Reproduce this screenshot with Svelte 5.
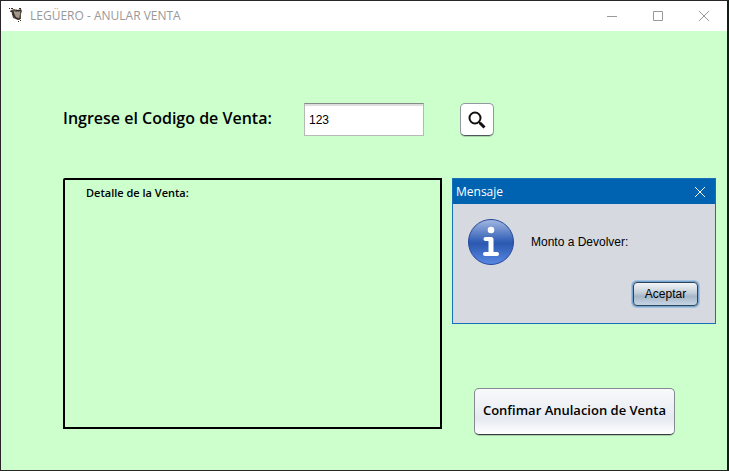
<script>
  let code = $state('123');
  let dialogOpen = $state(true);
</script>

<div class="window">
  <header class="titlebar">
    <svg class="logo" width="14" height="16" viewBox="0 0 14 16" aria-hidden="true">
      <path d="M2 3l3 -1 3 1 4-1 1 2-1 3v5l-3 1-5-2-1-4z" fill="#5a4f47" />
      <path d="M5 4l2 1 4-1v3l-1 4-3-1-2-4z" fill="#a3968a" />
      <path d="M1 4l3 1 1 4 3 3h3M3 7l3 3M7 3l3 1 2-1" fill="none" stroke="#2b2421" />
      <path d="M0 1h1v1H0zM2 1h2v1H2zM10 1h2v1h-2zM11 13h1v1h-1zM9 14h1v1H9z" fill="#3a302b" />
    </svg>
    <h1>LEGÜERO - ANULAR VENTA</h1>
    <div class="controls">
      <button aria-label="Minimizar"><svg width="10" height="10"><path d="M0 5.500h10" /></svg></button>
      <button aria-label="Maximizar"><svg width="10" height="10"><path d="M.5 .5h9v9h-9z" /></svg></button>
      <button aria-label="Cerrar"><svg width="10" height="10"><path d="M0 0l10 10M10 0L0 10" /></svg></button>
    </div>
  </header>

  <main>
    <form class="search" onsubmit={(e) => e.preventDefault()}>
      <label for="code">Ingrese el Codigo de Venta:</label>
      <input id="code" type="text" bind:value={code} />
      <button class="find" aria-label="Buscar">
        <svg width="18" height="18" viewBox="0 0 18 18" aria-hidden="true">
          <circle cx="7" cy="7" r="5.500" fill="none" stroke="#111" stroke-width="2" />
          <path d="M10.500 10.500l2 2" stroke="#111" stroke-width="2" />
          <path d="M12 12l4.500 4.500" stroke="#111" stroke-width="3" />
        </svg>
      </button>
    </form>

    <div class="body">
      <section class="detail"><h2>Detalle de la Venta:</h2></section>

      <div class="side">
        <div class="slot">
          {#if dialogOpen}
            <div class="dialog" role="dialog" aria-labelledby="dialog-title">
              <div class="dialog-bar">
                <span id="dialog-title">Mensaje</span>
                <button aria-label="Cerrar mensaje" onclick={() => (dialogOpen = false)}>
                  <svg width="10" height="10"><path d="M0 0l10 10M10 0L0 10" /></svg>
                </button>
              </div>
              <div class="message">
                <svg width="48" height="48" viewBox="0 0 48 48" aria-hidden="true">
                  <defs>
                    <linearGradient id="info" x1="0" y1="0" x2="0" y2="1">
                      <stop offset="0" stop-color="#a3b9e2" />
                      <stop offset=".46" stop-color="#3763b8" />
                      <stop offset=".54" stop-color="#2b59b1" />
                      <stop offset="1" stop-color="#5a89e4" />
                    </linearGradient>
                  </defs>
                  <circle cx="24" cy="24" r="22.500" fill="url(#info)" stroke="#25489a" />
                  <circle cx="24" cy="12" r="3.300" fill="#fff" />
                  <path d="M18.500 21h5" fill="none" stroke="#fff" stroke-width="4" stroke-linecap="round" />
                  <path d="M24 21.500v14" fill="none" stroke="#fff" stroke-width="5" stroke-linecap="round" />
                  <path d="M18 36h12" fill="none" stroke="#fff" stroke-width="4" stroke-linecap="round" />
                </svg>
                <p>Monto a Devolver:</p>
              </div>
              <div class="actions">
                <button class="accept" onclick={() => (dialogOpen = false)}>Aceptar</button>
              </div>
            </div>
          {/if}
        </div>
        <button class="confirm">Confimar Anulacion de Venta</button>
      </div>
    </div>
  </main>
</div>

<style>
  :global(body) { margin: 0; }
  * { box-sizing: border-box; }
  h1, h2, p { margin: 0; }
  button { padding: 0; color: #000; }
  svg { display: block; }

  .window {
    display: flex;
    flex-direction: column;
    min-height: 100vh;
    border: 1px solid #29252b;
    border-right: 2px solid #151b16;
    background: #ccffcc;
    font-family: "Open Sans", "Noto Sans", sans-serif;
  }
  .titlebar {
    display: flex;
    align-items: center;
    height: 30px;
    padding-left: 8px;
    background: #fff;
  }
  .logo { margin-right: 7px; margin-bottom: 2px; }
  h1 {
    flex: 1;
    color: #999;
    font: 400 12px/16px "Open Sans", "Noto Sans", sans-serif;
  }
  .controls { display: flex; }
  .controls button {
    display: grid;
    place-items: center;
    width: 46px;
    height: 28px;
    border: 0;
    background: none;
  }
  .controls path { fill: none; stroke: #999; }

  main { padding: 72px 11px 35px 62px; }
  .search { display: flex; align-items: center; }
  label {
    width: 241px;
    padding-bottom: 3px;
    font-size: 16px;
    line-height: 30px;
    font-weight: 600;
    white-space: nowrap;
  }
  input {
    width: 120px;
    height: 33px;
    padding: 0 4px;
    border: 1px solid #b5bab5;
    border-top-color: #858a88;
    border-radius: 0;
    background: #fff;
    box-shadow: inset 0 2px 1px #ddd;
    font: 12px "Liberation Sans", Arial, sans-serif;
    outline: 0;
  }
  .find {
    display: grid;
    place-items: center;
    width: 34px;
    height: 33px;
    margin-left: 36px;
    border: 1px solid #92989f;
    border-bottom-color: #50565f;
    border-radius: 5px;
    background: #fff;
    box-shadow: 0 1px #aad3ad;
  }
  .body {
    display: grid;
    grid-template-columns: minmax(0, 379fr) minmax(0, 264fr);
    column-gap: 10px;
    align-items: start;
    margin-top: 42px;
  }
  .detail {
    height: 251px;
    padding: 5px 21px;
    border: 2px solid #000;
    border-top-left-radius: 2px;
  }
  h2 { font-size: 11px; line-height: 16px; font-weight: 600; }
  .side { display: flex; flex-direction: column; }
  .slot { height: 210px; }
  .dialog {
    height: 146px;
    border: 1px solid #1770b8;
    background: #d6d9df;
  }
  .dialog-bar {
    display: flex;
    align-items: center;
    justify-content: space-between;
    height: 25px;
    padding: 0 10px 0 3px;
    background: #0063b1;
    color: #fff;
    font-size: 12px;
    line-height: 16px;
  }
  .dialog-bar button { border: 0; background: none; }
  .dialog-bar path { stroke: #fff; }
  .message {
    display: flex;
    align-items: center;
    gap: 16px;
    padding: 14px 14px 0;
  }
  .message p { font: 12px/16px "Liberation Sans", Arial, sans-serif; }
  .actions { display: flex; justify-content: flex-end; padding: 16px 17px 0; }
  .accept {
    width: 65px;
    height: 24px;
    border: 1px solid #2d4358;
    border-radius: 4px;
    background: linear-gradient(#f3f5f8, #c3ced9 45%, #a5b6c8 60%, #c6d5e4);
    box-shadow: 0 0 0 1px #78a5d0, 0 0 0 2px #a3c0dc;
    font: 12px/16px "Liberation Sans", Arial, sans-serif;
  }
  .confirm {
    align-self: flex-start;
    width: 201px;
    height: 47px;
    margin-left: 22px;
    padding-bottom: 3px;
    border: 1px solid #858991;
    border-bottom-color: #343943;
    border-radius: 5px;
    background: linear-gradient(#f8f9fb, #eceff4 45%, #e6e9f1 65%, #fff);
    box-shadow: 0 1px #a9d2ac;
    font: 600 13px/16px "Open Sans", "Noto Sans", sans-serif;
    white-space: nowrap;
  }
</style>
